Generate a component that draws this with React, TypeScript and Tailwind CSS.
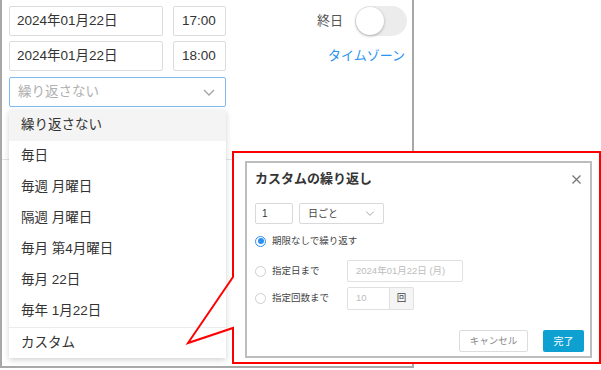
import React from 'react';

const font = "font-[family-name:'Liberation_Sans','Noto_Sans_CJK_JP',sans-serif]";

function Chevron({ className = '' }: { className?: string }) {
    return (
        <svg width="12" height="7" viewBox="0 0 12 7" className={className}>
            <polyline points="1,1 6,6 11,1" fill="none" stroke="#a3a3a3" strokeWidth="1.3" />
        </svg>
    );
}

function Field({ children, className = '' }: { children: React.ReactNode; className?: string }) {
    return (
        <div className={`h-full flex items-center border border-[#dcdcdc] rounded-[2px] px-[7px] text-[13.5px] text-[#333] ${className}`}>
            {children}
        </div>
    );
}

function Radio({ checked = false }: { checked?: boolean }) {
    return checked ? (
        <span className="w-[11px] h-[11px] rounded-full border border-[#2b8ff0] flex items-center justify-center">
            <span className="w-[6px] h-[6px] rounded-full bg-[#2b8ff0]" />
        </span>
    ) : (
        <span className="w-[11px] h-[11px] rounded-full border border-[#cfcfcf] bg-white" />
    );
}

const options = ['繰り返さない', '毎日', '毎週 月曜日', '隔週 月曜日', '毎月 第4月曜日', '毎月 22日', '毎年 1月22日'];

export default function App() {
    return (
        <div className={`relative w-[601px] h-[370px] overflow-hidden bg-white text-[#333] ${font}`}>
            {/* EVENT FORM PANEL */}
            <div className="relative w-[414px] h-[368px] border-x-2 border-b-2 border-[#a8a8a8] pl-[7px] pr-[5px] pt-[6px]">
                <div className="flex items-center h-[30px]">
                    <Field className="w-[154px]">2024年01月22日</Field>
                    <Field className="w-[53px] ml-[10px] pl-[8px]">17:00</Field>
                    <div className="ml-auto flex items-center gap-[12px]">
                        <span className="text-[13px] text-[#555]">終日</span>
                        <div className="w-[52px] h-[30px] rounded-full bg-[#ececec] flex items-center px-[1px]">
                            <div className="w-[28px] h-[28px] rounded-full bg-white shadow-[0_1px_3px_rgba(0,0,0,0.3)]" />
                        </div>
                    </div>
                </div>
                <div className="flex items-center h-[30px] mt-[5px]">
                    <Field className="w-[154px]">2024年01月22日</Field>
                    <Field className="w-[53px] ml-[10px] pl-[8px]">18:00</Field>
                    <span className="ml-auto mr-[2px] text-[13px] text-[#2b93f0]">タイムゾーン</span>
                </div>
                <div className="mt-[6px] w-[217px] h-[30px] border border-[#80bbf2] rounded-[2px] flex items-center pl-[8px] pr-[10px]">
                    <span className="text-[13.5px] text-[#b0b0b0]">繰り返さない</span>
                    <Chevron className="ml-auto" />
                </div>
                <div className="mt-[52px] -ml-[7px] -mr-[5px] border-t border-[#e3e3e3]" />

                {/* DROPDOWN */}
                <div className="absolute left-[7px] top-[110px] w-[217px] bg-white shadow-[0_2px_6px_rgba(0,0,0,0.18)]">
                    {options.map((o, i) => (
                        <div
                            key={o}
                            className={`h-[31px] flex items-center pl-[12px] text-[13.5px] text-[#333] ${i === 0 ? 'bg-[#f4f4f4]' : ''}`}
                        >
                            {o}
                        </div>
                    ))}
                    <div className="h-[31px] flex items-center pl-[12px] text-[13.5px] text-[#333] border-t border-[#ececec]">カスタム</div>
                </div>
            </div>

            {/* CALLOUT */}
            <svg width="601" height="370" className="absolute inset-0 pointer-events-none">
                <rect x="233" y="152" width="367" height="211" fill="#fff" />
                <path
                    d="M233,277 L233,152 L600,152 L600,363 L233,363 L233,328 L188,343 Z"
                    fill="none"
                    stroke="#ff0000"
                    strokeWidth="2"
                    strokeLinejoin="miter"
                />
            </svg>

            {/* CUSTOM REPEAT DIALOG */}
            <div className="absolute left-[245px] top-[161px] w-[347px] h-[197px] bg-white border-2 border-[#bdbdbd] flex flex-col pl-[8px] pr-[6px]">
                <div className="flex items-center h-[18px] mt-[7px]">
                    <span className="text-[13px] font-bold text-[#333]">カスタムの繰り返し</span>
                    <svg width="9" height="9" viewBox="0 0 9 9" className="ml-auto mr-[3px]">
                        <path d="M0.5,0.5 L8.5,8.5 M8.5,0.5 L0.5,8.5" stroke="#777" strokeWidth="1.3" />
                    </svg>
                </div>
                <div className="flex items-center h-[21px] mt-[15px] gap-[6px]">
                    <div className="w-[38px] h-full border border-[#d9d9d9] rounded-[2px] flex items-center pl-[6px] text-[10px]">1</div>
                    <div className="w-[85px] h-full border border-[#d9d9d9] rounded-[2px] flex items-center pl-[8px] pr-[7px] text-[10px] text-[#444]">
                        日ごと
                        <Chevron className="ml-auto scale-75" />
                    </div>
                </div>
                <div className="flex items-center h-[18px] mt-[8px] gap-[6px]">
                    <Radio checked />
                    <span className="text-[9.5px] text-[#444]">期限なしで繰り返す</span>
                </div>
                <div className="flex items-center h-[22px] mt-[10px]">
                    <div className="w-[92px] flex items-center gap-[6px]">
                        <Radio />
                        <span className="text-[9.5px] text-[#444]">指定日まで</span>
                    </div>
                    <div className="w-[116px] h-full border border-[#e0e0e0] rounded-[2px] flex items-center pl-[8px] text-[9.5px] text-[#bdbdbd]">
                        2024年01月22日 (月)
                    </div>
                </div>
                <div className="flex items-center h-[23px] mt-[5px]">
                    <div className="w-[92px] flex items-center gap-[6px]">
                        <Radio />
                        <span className="text-[9.5px] text-[#444]">指定回数まで</span>
                    </div>
                    <div className="w-[43px] h-full border border-[#e0e0e0] rounded-l-[2px] flex items-center pl-[8px] text-[9.5px] text-[#bdbdbd]">10</div>
                    <div className="w-[24px] h-full border border-l-0 border-[#e0e0e0] bg-[#f5f5f5] rounded-r-[2px] flex items-center justify-center text-[9.5px] text-[#444]">回</div>
                </div>
                <div className="mt-auto mb-[4px] flex justify-end gap-[15px]">
                    <div className="w-[69px] h-[22px] border border-[#dcdcdc] rounded-[2px] flex items-center justify-center text-[9.5px] text-[#888]">キャンセル</div>
                    <div className="w-[41px] h-[22px] rounded-[2px] bg-[#0fa0d2] flex items-center justify-center text-[10px] text-white">完了</div>
                </div>
            </div>
        </div>
    );
}
